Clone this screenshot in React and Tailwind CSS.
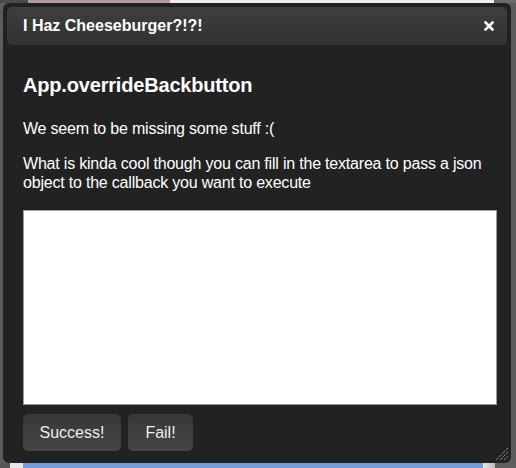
import React from "react";

export default function App() {
  const font = { fontFamily: '"Liberation Sans", Arial, sans-serif' };
  return (
    <div className="relative w-[516px] h-[468px] bg-[#5c5c5c] overflow-hidden flex flex-col justify-between" style={font}>
      {/* page behind: top strip */}
      <div className="flex h-[3px]">
        <div className="w-[28px] bg-[#4a4a4a]" />
        <div className="w-[142px] bg-[#b89a98]" />
        <div className="flex-1 bg-[#efefef]" />
        <div className="w-[22px] bg-[#6a6a6a]" />
      </div>
      {/* page behind: bottom strip */}
      <div className="flex h-[5px]">
        <div className="w-[10px] bg-[#555]" />
        <div className="w-[13px] bg-[#e6e6e6]" />
        <div className="w-[460px] bg-[#739ddf]" />
        <div className="w-[12px] bg-gradient-to-r from-[#e8e8e8] to-[#bdbdbd]" />
        <div className="flex-1 bg-[#5f5f5f]" />
      </div>

      {/* dialog */}
      <div className="absolute left-[3px] top-[3px] w-[508px] h-[460px] bg-[#222222] rounded-[6px] flex flex-col">
        <div className="mx-[4px] mt-[4px] h-[38px] rounded-[5px] bg-gradient-to-b from-[#3e3e3e] to-[#323232] flex items-center justify-between pl-[16px] pr-[13px]">
          <span className="text-white font-bold text-[16px] leading-[20px]">I Haz Cheeseburger?!?!</span>
          <svg width="10" height="10" viewBox="0 0 10 10" className="block">
            <path d="M1.5 1.5 L8.5 8.5 M8.5 1.5 L1.5 8.5" stroke="#fff" strokeWidth="2.6" strokeLinecap="square" />
          </svg>
        </div>
        <div className="pl-[20px] pr-[14px] flex flex-col">
          <h1 className="mt-[28px] text-white font-bold text-[20px] leading-[24px] tracking-[-0.18px]">App.overrideBackbutton</h1>
          <p className="mt-[22px] text-white text-[16px] leading-[19px] tracking-[-0.2px]">We seem to be missing some stuff :(</p>
          <p className="mt-[16px] text-white text-[16px] leading-[19px] tracking-[-0.2px] pr-[6px]">
            What is kinda cool though you can fill in the textarea to pass a json object to the callback you want to execute
          </p>
          <textarea className="mt-[18px] h-[195px] w-full bg-white border border-[#9a9a9a] resize-none outline-none" />
          <div className="mt-[9px] flex gap-[7px]">
            <button className="h-[37px] w-[98px] rounded-[5px] bg-gradient-to-b from-[#383838] to-[#454545] text-[#eeeeee] text-[16px]">Success!</button>
            <button className="h-[37px] w-[65px] rounded-[5px] bg-gradient-to-b from-[#383838] to-[#454545] text-[#eeeeee] text-[16px]">Fail!</button>
          </div>
        </div>
        <svg width="14" height="14" viewBox="0 0 14 14" className="absolute right-[2px] bottom-[2px]">
          <path d="M1 13 L13 1 M5 13 L13 5 M9 13 L13 9" stroke="#bbbbbb" strokeWidth="1" strokeDasharray="1 1" />
        </svg>
      </div>
    </div>
  );
}
